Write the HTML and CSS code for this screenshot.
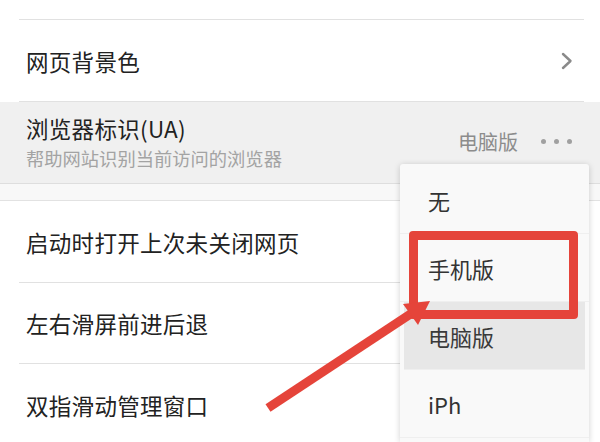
FILE: index.html
```html
<!DOCTYPE html>
<html lang="zh-CN">
<head>
    <meta charset="UTF-8">
    <meta name="viewport" content="width=device-width, initial-scale=1.0">
    <title>浏览器设置</title>
    <link rel="stylesheet" href="styles.css">
</head>
<body>
    <div class="settings">
        <div class="item lead">
            <div class="item-inner"></div>
        </div>
        <div class="item">
            <div class="item-inner">
                <span class="label">网页背景色</span>
                <svg class="chevron" width="12" height="18" viewBox="0 0 12 18">
                    <path d="M2 2 L9.5 9 L2 16" fill="none" stroke="#8a8a8a" stroke-width="2.4" stroke-linecap="round" stroke-linejoin="round"/>
                </svg>
            </div>
        </div>
        <div class="item ua">
            <div class="item-inner">
                <div class="ua-text">
                    <span class="label">浏览器标识(UA)</span>
                    <span class="sub">帮助网站识别当前访问的浏览器</span>
                </div>
                <span class="value">电脑版</span>
                <span class="dots"><i></i><i></i><i></i></span>
            </div>
        </div>
        <div class="group-gap"></div>
        <div class="item">
            <div class="item-inner">
                <span class="label">启动时打开上次未关闭网页</span>
            </div>
        </div>
        <div class="item">
            <div class="item-inner short">
                <span class="label">左右滑屏前进后退</span>
            </div>
        </div>
        <div class="item">
            <div class="item-inner last">
                <span class="label">双指滑动管理窗口</span>
            </div>
        </div>
    </div>

    <!-- UA dropdown -->
    <ul class="menu">
        <li>无</li>
        <li>手机版</li>
        <li class="active">电脑版</li>
        <li>iPh</li>
    </ul>

    <!-- annotation -->
    <div class="mark-box"></div>
    <svg class="mark-arrow" width="600" height="442" viewBox="0 0 600 442">
        <line x1="268" y1="408" x2="412" y2="313" stroke="#e5443a" stroke-width="9"/>
        <polygon points="430,301 403,304 418,325" fill="#e5443a"/>
    </svg>
</body>
</html>
```

FILE: styles.css
```css
body {
    margin: 0;
    background-color: #fff;
    font-family: "Noto Sans CJK SC", "Noto Sans", sans-serif;
    color: #222;
    overflow: hidden;
    height: 442px;
    position: relative;
}

.settings {
    display: flex;
    flex-direction: column;
}

.item-inner {
    box-sizing: border-box;
    height: 82px;
    margin: 0 16px 0 19px;
    padding-left: 7px;
    border-bottom: 1px solid #e1e1e1;
    display: flex;
    align-items: center;
}

.item-inner.short {
    height: 81px;
}

.item-inner.last {
    height: 78px;
    border-bottom: none;
    padding-top: 3px;
}

.lead .item-inner {
    height: 20px;
}

.label {
    font-size: 22.5px;
    line-height: 28px;
    letter-spacing: 0.3px;
}

.chevron {
    margin-left: auto;
    margin-right: 11px;
}

.ua {
    background-color: #f0f0f0;
}

.ua .item-inner {
    height: 81px;
    border-bottom: none;
    margin-right: 0;
    padding-right: 28px;
}

.ua-text {
    display: flex;
    flex-direction: column;
}

.ua .label {
    margin-top: -2px;
}

.sub {
    font-size: 18.3px;
    line-height: 24px;
    color: #a3a3a3;
    margin-top: 4px;
}

.value {
    margin-left: auto;
    font-size: 20px;
    color: #8c8c8c;
    margin-top: -2px;
}

.dots {
    display: flex;
    gap: 8px;
    margin-left: 23px;
    margin-top: -2px;
}

.dots i {
    width: 5px;
    height: 5px;
    border-radius: 50%;
    background-color: #a0a0a0;
}

.group-gap {
    height: 16px;
    background-color: #f8f8f8;
    border-top: 1px solid #dedede;
    border-bottom: 1px solid #e2e2e2;
}

.menu {
    position: absolute;
    left: 400px;
    top: 164px;
    width: 189px;
    height: 278px;
    box-sizing: border-box;
    margin: 0;
    padding: 2px 0 0;
    overflow: hidden;
    list-style: none;
    background-color: #f9f9f9;
    border-radius: 3px 3px 0 0;
    box-shadow: 0 1px 6px rgba(0, 0, 0, 0.18);
}

.menu li {
    box-sizing: border-box;
    height: 68px;
    padding-left: 28px;
    display: flex;
    align-items: center;
    font-size: 22px;
    color: #333;
    border-bottom: 1px solid #efefef;
}

.menu li.active {
    background-color: #e7e7e7;
    margin: 0 4px;
    padding-left: 24px;
    color: #3a3a3a;
}

.mark-box {
    position: absolute;
    left: 409px;
    top: 231px;
    width: 169px;
    height: 88px;
    box-sizing: border-box;
    border: 9px solid #e5443a;
    border-radius: 4px;
}

.mark-arrow {
    position: absolute;
    left: 0;
    top: 0;
}
```
